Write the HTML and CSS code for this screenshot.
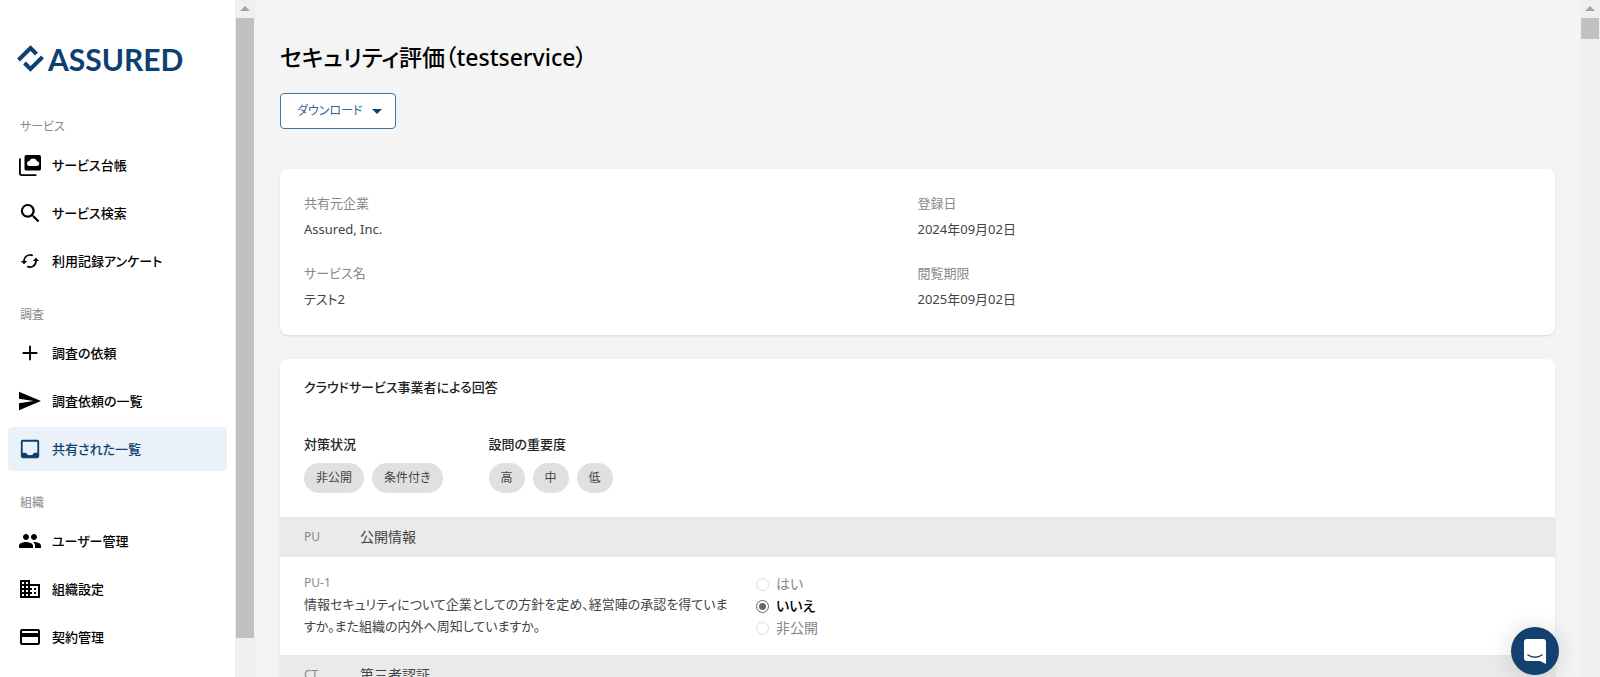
FILE: index.html
```
<!DOCTYPE html>
<html lang="ja">
<head>
    <meta charset="UTF-8">
    <meta name="viewport" content="width=device-width, initial-scale=1.0">
    <title>セキュリティ評価 | Assured</title>
    <link rel="stylesheet" href="styles.css">
</head>
<body>
    <aside class="sidebar">
        <a href="#" class="logo">
            <svg class="logo-mark" viewBox="0 0 27 27" fill="none" stroke="#0b406f" stroke-width="4">
                <path d="M1.500 15 13.500 3l6 6"/>
                <path d="M25.500 12 13.500 24l-6-6"/>
            </svg>
            <span>ASSURED</span>
        </a>
        <nav>
            <h2 class="nav-title">サービス</h2>
            <ul class="nav-list">
                <li><a href="#">
                    <svg viewBox="0 0 24 24"><path fill-rule="evenodd" d="M8 1h14a2 2 0 0 1 2 2v13a2 2 0 0 1-2 2H8a2 2 0 0 1-2-2V3a2 2 0 0 1 2-2zm2.700 12h8.800a2.500 2.500 0 0 0 .3-5A4.600 4.600 0 0 0 11.300 7.700 2.700 2.700 0 0 0 10.700 13zM2 5v16a1 1 0 0 0 1 1h16v2H3a3 3 0 0 1-3-3V5z"/></svg>
                    サービス台帳</a></li>
                <li><a href="#">
                    <svg viewBox="0 0 24 24"><path d="M16.500 14.800h-.9l-.3-.3a7.500 7.500 0 1 0-.8.8l.3.3v.9l5.700 5.600 1.700-1.700zm-7 0a5.200 5.200 0 1 1 0-10.400 5.200 5.200 0 0 1 0 10.400z"/></svg>
                    サービス検索</a></li>
                <li><a href="#">
                    <svg viewBox="0 0 24 24"><path d="M12 4.500c-4.100 0-7.400 3.300-7.500 7.400H2l3.500 3.700L9 11.900H6.400A5.600 5.600 0 0 1 14.300 6.800l1.400-1.400A7.500 7.500 0 0 0 12 4.500zM18.500 8.400 15 12.100h2.600a5.600 5.600 0 0 1-7.900 5.100l-1.400 1.400a7.500 7.500 0 0 0 11.200-6.500H22z"/></svg>
                    利用記録アンケート</a></li>
            </ul>
            <h2 class="nav-title">調査</h2>
            <ul class="nav-list">
                <li><a href="#">
                    <svg viewBox="0 0 24 24"><path d="M20 13h-7v7h-2v-7H4v-2h7V4h2v7h7z"/></svg>
                    調査の依頼</a></li>
                <li><a href="#">
                    <svg viewBox="0 0 24 24"><path d="M0 22 24 12 0 2v7.500L16 12 0 14.500z"/></svg>
                    調査依頼の一覧</a></li>
                <li><a href="#" class="active">
                    <svg viewBox="0 0 24 24"><path fill-rule="evenodd" d="M4 2h16a2 2 0 0 1 2 2v16a2 2 0 0 1-2 2H4a2 2 0 0 1-2-2V4a2 2 0 0 1 2-2zm0 2v12h3.500a5 5 0 0 0 9 0H20V4z"/></svg>
                    共有された一覧</a></li>
            </ul>
            <h2 class="nav-title">組織</h2>
            <ul class="nav-list">
                <li><a href="#">
                    <svg viewBox="1 1 22 22"><path d="M16 11c1.660 0 2.990-1.340 2.990-3S17.660 5 16 5s-3 1.340-3 3 1.340 3 3 3zm-8 0c1.660 0 2.990-1.340 2.990-3S9.660 5 8 5 5 6.340 5 8s1.340 3 3 3zm0 2c-2.330 0-7 1.170-7 3.500V19h14v-2.500C15 14.170 10.330 13 8 13zm8 0c-.290 0-.620.020-.970.050 1.160.840 1.970 1.970 1.970 3.450V19h6v-2.500c0-2.330-4.670-3.500-7-3.500z"/></svg>
                    ユーザー管理</a></li>
                <li><a href="#">
                    <svg viewBox="1 1 22 22"><path d="M12 7V3H2v18h20V7H12zM6 19H4v-2h2v2zm0-4H4v-2h2v2zm0-4H4V9h2v2zm0-4H4V5h2v2zm4 12H8v-2h2v2zm0-4H8v-2h2v2zm0-4H8V9h2v2zm0-4H8V5h2v2zm10 12h-8v-2h2v-2h-2v-2h2v-2h-2V9h8v10zm-2-8h-2v2h2v-2zm0 4h-2v2h2v-2z"/></svg>
                    組織設定</a></li>
                <li><a href="#">
                    <svg viewBox="1 1 22 22"><path d="M20 4H4c-1.110 0-1.990.890-1.990 2L2 18c0 1.110.890 2 2 2h16c1.110 0 2-.890 2-2V6c0-1.110-.890-2-2-2zm0 14H4v-6h16v6zm0-10H4V6h16v2z"/></svg>
                    契約管理</a></li>
            </ul>
        </nav>
    </aside>
    <div class="scrollbar">
        <div class="scroll-arrow"></div>
        <div class="scroll-thumb"></div>
    </div>

    <main>
        <h1>セキュリティ評価（testservice）</h1>
        <button type="button" class="download">ダウンロード<span class="caret"></span></button>

        <section class="card">
            <dl class="info">
                <div><dt>共有元企業</dt><dd>Assured, Inc.</dd></div>
                <div><dt>登録日</dt><dd>2024年09月02日</dd></div>
                <div><dt>サービス名</dt><dd>テスト2</dd></div>
                <div><dt>閲覧期限</dt><dd>2025年09月02日</dd></div>
            </dl>
        </section>

        <section class="card">
            <h2 class="card-title">クラウドサービス事業者による回答</h2>
            <div class="filters">
                <div>
                    <h3>対策状況</h3>
                    <div class="chips">
                        <button type="button">非公開</button>
                        <button type="button">条件付き</button>
                    </div>
                </div>
                <div>
                    <h3>設問の重要度</h3>
                    <div class="chips">
                        <button type="button">高</button>
                        <button type="button">中</button>
                        <button type="button">低</button>
                    </div>
                </div>
            </div>

            <div class="category"><span class="code">PU</span><span>公開情報</span></div>
            <div class="question">
                <div>
                    <p class="code">PU-1</p>
                    <p class="text" id="pu1">情報セキュリティについて企業としての方針を定め、経営陣の承認を得ていま<br>すか。また組織の内外へ周知していますか。</p>
                </div>
                <div class="answers" role="radiogroup" aria-labelledby="pu1">
                    <label><input type="radio" name="pu1">はい</label>
                    <label><input type="radio" name="pu1" checked>いいえ</label>
                    <label><input type="radio" name="pu1">非公開</label>
                </div>
            </div>
            <div class="category"><span class="code">CT</span><span>第三者認証</span></div>
        </section>
    </main>
    <div class="scrollbar">
        <div class="scroll-arrow"></div>
        <div class="scroll-thumb small"></div>
    </div>

    <button type="button" class="chat" aria-label="チャットを開く">
        <svg viewBox="0 0 22 25">
            <path fill="#fff" d="M3 0h16a3 3 0 0 1 3 3v22l-6-3H3a3 3 0 0 1-3-3V3a3 3 0 0 1 3-3z"/>
            <path fill="none" stroke="#12416f" stroke-width="1.500" stroke-linecap="round" d="M4 16c4 3 10 3 14 0"/>
        </svg>
    </button>
</body>
</html>
```
FILE: styles.css
```
* {
    box-sizing: border-box;
    margin: 0;
    padding: 0;
}

body {
    display: flex;
    height: 100vh;
    overflow: hidden;
    background-color: #f4f4f4;
    color: #444;
    font-family: "Noto Sans", "Noto Sans CJK JP", sans-serif;
    font-feature-settings: "palt";    /* かなを詰める */
    font-size: 14px;
    line-height: 22px;
}

button {
    font: inherit;
    font-feature-settings: inherit;
    cursor: pointer;
}

/* サイドバー */
.sidebar {
    flex: 0 0 235px;
    padding: 0 8px;
    background-color: #fff;
    overflow: hidden;
}

.logo {
    display: flex;
    align-items: center;
    height: 117px;
    padding-left: 9px;
    gap: 4px;
    color: #0b406f;
    font-family: Lato, sans-serif;
    font-size: 30px;
    font-weight: bold;
    text-decoration: none;
}

.logo-mark {
    width: 27px;
    height: 27px;
}

.nav-title {
    padding: 0 12px;
    color: #888;
    font-size: 12px;
    font-weight: normal;
    line-height: 20px;
}

.nav-list {
    display: grid;
    gap: 4px;
    margin: 6px 0 22px;
    list-style: none;
}

.nav-list a {
    display: flex;
    align-items: center;
    gap: 11px;
    height: 44px;
    padding: 0 11px;
    border-radius: 4px;
    color: #000;
    font-size: 13px;
    font-weight: 500;
    text-decoration: none;
}

.nav-list svg {
    width: 22px;
    height: 22px;
    fill: currentColor;
}

.nav-list .active {
    background-color: #eaf1f8;
    color: #0b406f;
}

/* スクロールバー */
.scrollbar {
    flex: 0 0 20px;
    background-color: #f0f0f0;
}

.scroll-arrow {
    width: 10px;
    height: 5px;
    margin: 6px auto 7px;
    background-color: #a3a3a3;
    clip-path: polygon(50% 0, 100% 100%, 0 100%);
}

.scroll-thumb {
    height: calc(100% - 57px);
    margin: 0 1px;
    background-color: #c1c1c1;
}

.scroll-thumb.small {
    height: 21px;
}

/* メイン */
main {
    flex: 1;
    padding: 41px 25px 0;
    overflow: hidden;
}

h1 {
    color: #000;
    font-size: 23px;
    font-weight: 500;
    line-height: 32px;
}

.download {
    display: flex;
    align-items: center;
    gap: 10px;
    height: 36px;
    margin: 20px 0 40px;
    padding: 0 13px 0 16px;
    border: 1px solid #3f74a3;
    border-radius: 4px;
    background-color: #fff;
    color: #2f6796;
    font-size: 12px;
}

.caret {
    border: 5px solid transparent;
    border-top-color: #0b406f;
    border-bottom: 0;
}

.card {
    margin-bottom: 24px;
    border-radius: 8px;
    background-color: #fff;
    box-shadow: 0 1px 2px rgba(0, 0, 0, 0.12);
    overflow: hidden;
}

.info {
    display: grid;
    grid-template-columns: 1fr 1fr;
    gap: 22px 0;
    padding: 23px 24px 25px;
}

.info dt {
    color: #888;
    font-size: 13px;
}

.info dd {
    margin-top: 4px;
    font-size: 13px;
}

.card-title {
    padding: 17px 24px 18px;
    color: #222;
    font-size: 13px;
    font-weight: 500;
}

.filters {
    display: flex;
    gap: 46px;
    padding: 17px 24px 24px;
}

.filters h3 {
    color: #222;
    font-size: 13px;
    font-weight: 500;
}

.chips {
    display: flex;
    gap: 8px;
    margin-top: 8px;
}

.chips button {
    height: 30px;
    padding: 0 12px;
    border: 0;
    border-radius: 15px;
    background-color: #e0e0e0;
    color: #444;
    font-size: 12px;
}

.category {
    display: grid;
    grid-template-columns: 56px 1fr;
    align-items: center;
    height: 40px;
    padding: 0 24px;
    background-color: #eaeaea;
}

.code {
    color: #888;
    font-size: 12px;
}

.question {
    display: grid;
    grid-template-columns: 452px 1fr;
    padding: 16px 24px;
}

.question .code {
    line-height: 20px;
}

.question .text {
    font-size: 13px;
}

.answers label {
    display: flex;
    align-items: center;
    gap: 7px;
    color: #888;
}

.answers label:has(:checked) {
    color: #000;
    font-weight: 500;
}

.answers input {
    width: 13px;
    height: 13px;
    border: 1px solid #ddd;
    border-radius: 50%;
    appearance: none;
}

.answers input:checked {
    border-color: #666;
    background: radial-gradient(#666 3px, #fff 4px);
}

.chat {
    display: flex;
    align-items: center;
    justify-content: center;
    position: fixed;
    right: 41px;
    bottom: 2px;
    width: 48px;
    height: 48px;
    border: 0;
    border-radius: 50%;
    background-color: #12416f;
    box-shadow: 0 2px 24px rgba(0, 0, 0, 0.16);
}

.chat svg {
    width: 22px;
    height: 25px;
}
```
